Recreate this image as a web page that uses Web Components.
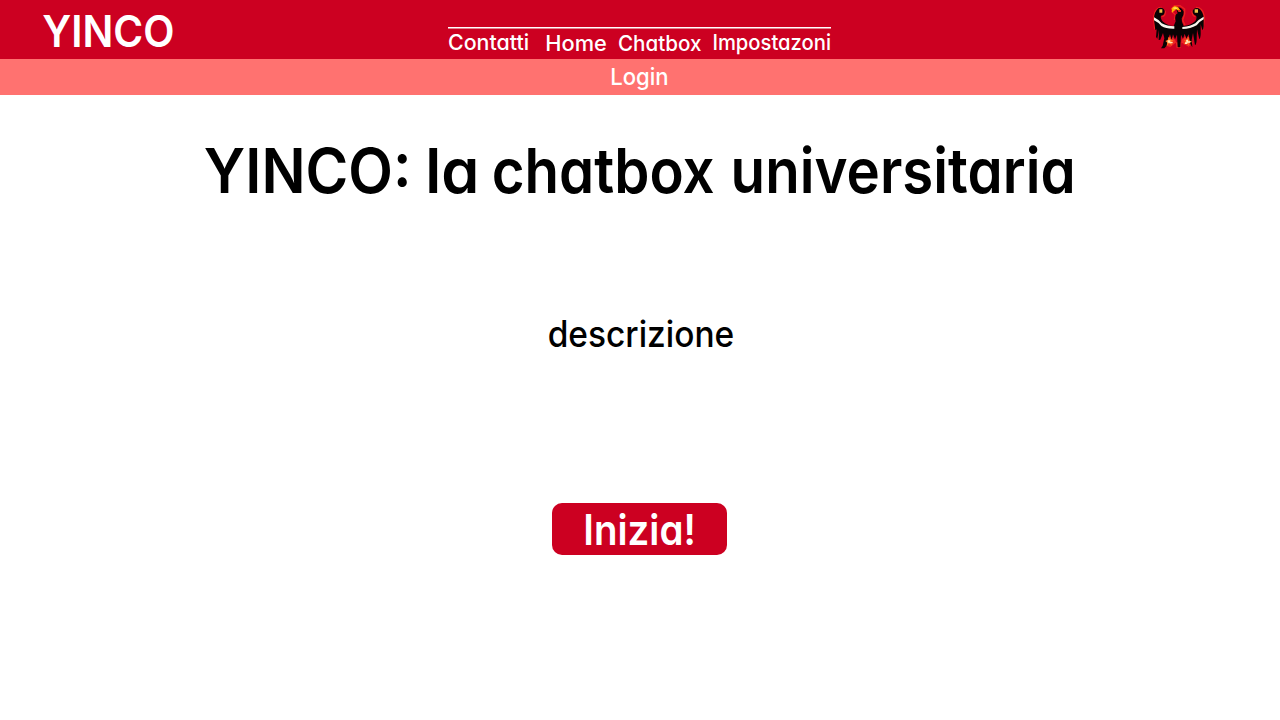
<!DOCTYPE html>
<html lang="it">
<head>
<meta charset="utf-8">
<title>YINCO</title>
<style>
html,body{margin:0;height:100%;background:#fff}
</style>
</head>
<body>
<yinco-app></yinco-app>
<script>
const define=(name,html,ready)=>{
  const t=document.createElement('template');t.innerHTML=html;
  customElements.define(name,class extends HTMLElement{
    constructor(){super();this.attachShadow({mode:'open'}).append(t.content.cloneNode(true));}
    connectedCallback(){if(ready)ready(this);}
  });
};

// A word whose box is exactly its cap height by its inked width.
const pen=document.createElement('canvas').getContext('2d');
const fitWord=el=>{
  const word=el.getAttribute('text'),w=+el.getAttribute('w'),cap=+el.getAttribute('cap');
  const s=el.shadowRoot.querySelector('span');
  s.textContent=word;
  const cs=getComputedStyle(s),family=cs.fontFamily,weight=cs.fontWeight;
  pen.font=`${weight} 100px ${family}`;
  const size=cap/pen.measureText('H').actualBoundingBoxAscent*100;
  s.style.fontSize=size+'px';
  const m=pen.measureText(word),k=size/100;
  const left=-m.actualBoundingBoxLeft*k,right=(m.width-m.actualBoundingBoxRight)*k;
  const adv=s.getBoundingClientRect().width;
  const sx=w/(adv-left-right);
  const A=m.fontBoundingBoxAscent*k,D=m.fontBoundingBoxDescent*k;
  const base=(cap-A-D)/2+A;
  s.style.lineHeight=cap+'px';
  el.style.width=w+'px';el.style.height=cap+'px';
  s.style.transform=`translate(${-left*sx}px,${cap-base}px) scaleX(${sx})`;
};
define('fit-word',`<style>
:host{display:block;flex:none;white-space:nowrap}
span{display:inline-block;vertical-align:top;transform-origin:0 0;font-feature-settings:"cv11" 1}
</style><span></span>`,fitWord);

define('eagle-crest',`<style>:host{display:block;width:70px;height:56px}svg{display:block}</style>
<svg width="70" height="56" viewBox="0 0 210 168">
<g fill="none" stroke="#f42a20" stroke-width="4" opacity=".8"><path d="M78 28L88 17L105 17L119 27L119 42L113 60L120 76M79 34L91 44L88 60M50 22Q30 22 26 50L29 88M153 22Q174 22 178 50L174 88M61 32Q62 48 50 50M141 32Q141 47 151 50"/></g>
<path fill="#f33022" opacity=".85" d="M62 116L80 108L92 122L95 144H107L110 120L124 106L138 116L143 130L131 140L108 127L94 127L76 141L59 136Z"/>
<path fill="#080304" d="M40 25Q54 20 59 33Q59 47 48 47Q45 55 54 65Q67 77 86 78L92 64Q89 53 92 44L98 40L95 31L90 26L96 22Q111 22 116 35Q117 45 110 55Q109 66 116 78Q137 77 151 63Q157 53 153 47Q142 43 143 32Q147 22 160 25Q174 33 176 54V79Q176 88 172 90L167 72L167 92Q168 112 163 118L156 88L155 118Q155 132 150 136L144 99L140 119L142 142L136 132L131 103L124 116L119 101L114 116L108 104L106 142H98L96 104L90 118L84 103L80 120L75 103L69 116L65 137L58 145H48L53 137L58 115L54 99L46 119L41 120L42 90L37 116L33 111L35 88L31 90L27 59Q27 36 40 25Z"/>
<path fill="#ffb000" d="M81 38L80 25L89 18L99 21L105 29L102 34L93 28Z"/><path fill="#ffe06b" d="M83 23L93 22L98 27L87 26Z"/>
<path fill="#e22c1e" d="M99 30H108V36H100Z"/>
<path fill="#ecc34c" d="M43 28H52V38H43ZM149 28H159V38H149Z"/>
<path fill="#f8f5ed" d="M27 52Q40 58 50 70Q66 79 88 79V86Q64 87 49 78Q40 67 27 61ZM176 50Q162 57 151 70Q137 79 112 81V87Q137 87 155 76Q163 65 176 58Z"/>
<path fill="#ff761f" d="M61 123L69 119L71 110L77 118L86 122L78 127L81 137L73 130L65 138L67 128ZM117 119L124 122L130 110L132 121L142 126L132 127L131 136L125 128L116 134L121 125Z"/>
<path fill="#ffe8b8" d="M68 121H76V126H83V130H73V128H68ZM123 119H129V124H136V128H127V132H120V127H124Z"/>
</svg>`);

define('top-bar',`<style>
:host{display:grid;grid-template-columns:405px 383px 1fr;column-gap:0;height:59px;box-sizing:border-box;background:#cc0021;color:#fff;align-items:start;padding:0 65px 0 43px}
.brand{padding-top:16px}
nav{display:flex;font-weight:500;border-top:1px solid #fff;box-shadow:inset 0 1px rgba(255,255,255,.5);margin-top:27px;padding:6.9px 0 0 1px;box-sizing:border-box;align-items:flex-start}
.a{margin-right:19px}.b{margin:.8px 13px 0 0}.c{margin:.8px 13px 0 0}
eagle-crest{justify-self:end}
</style>
<div class="brand"><fit-word text="YINCO" w="129.5" cap="31.5"></fit-word></div>
<nav><fit-word class="a" text="Contatti" w="79" cap="15.7"></fit-word><fit-word class="b" text="Home" w="59" cap="15.7"></fit-word><fit-word class="c" text="Chatbox" w="82" cap="15.7"></fit-word><fit-word text="Impostazoni" w="116" cap="15.7"></fit-word></nav>
<eagle-crest></eagle-crest>`);

define('login-bar',`<style>
:host{display:flex;height:36px;background:#ff7270;color:#fff;font-weight:500;justify-content:center;align-items:flex-start;padding:9px 2px 0 0;box-sizing:border-box}
</style><fit-word text="Login" w="55" cap="17"></fit-word>`);

define('start-button',`<style>
:host{display:flex;width:175px;height:52px;border-radius:10px;background:#cc0021;color:#fff;justify-content:center;padding:11.3px 1px 0 0;box-sizing:border-box}
</style><fit-word text="Inizia!" w="107" cap="31"></fit-word>`);

define('yinco-app',`<style>
:host{display:flex;flex-direction:column;height:100%;overflow:hidden;font-family:Inter,sans-serif;font-weight:600;color:#000}
main{display:flex;flex-direction:column;align-items:center}
h1{display:flex;margin:52.5px 3px 0 0;font:inherit;width:868px}
.y{margin-right:22px}.l{margin-right:19px}.c{margin-right:20px}
.d{margin:127.5px 0 0 1px;font-weight:500}
start-button{margin:156px 1px 0 0}
</style>
<top-bar></top-bar><login-bar></login-bar>
<main>
<h1><fit-word class="y" text="YINCO:" w="202" cap="45.5"></fit-word><fit-word class="l" text="la" w="46.5" cap="45.5"></fit-word><fit-word class="c" text="chatbox" w="219.5" cap="45.5"></fit-word><fit-word text="universitaria" w="338" cap="45.5"></fit-word></h1>
<fit-word class="d" text="descrizione" w="184" cap="26.5"></fit-word>
<start-button></start-button>
</main>`);
</script>
</body>
</html>
